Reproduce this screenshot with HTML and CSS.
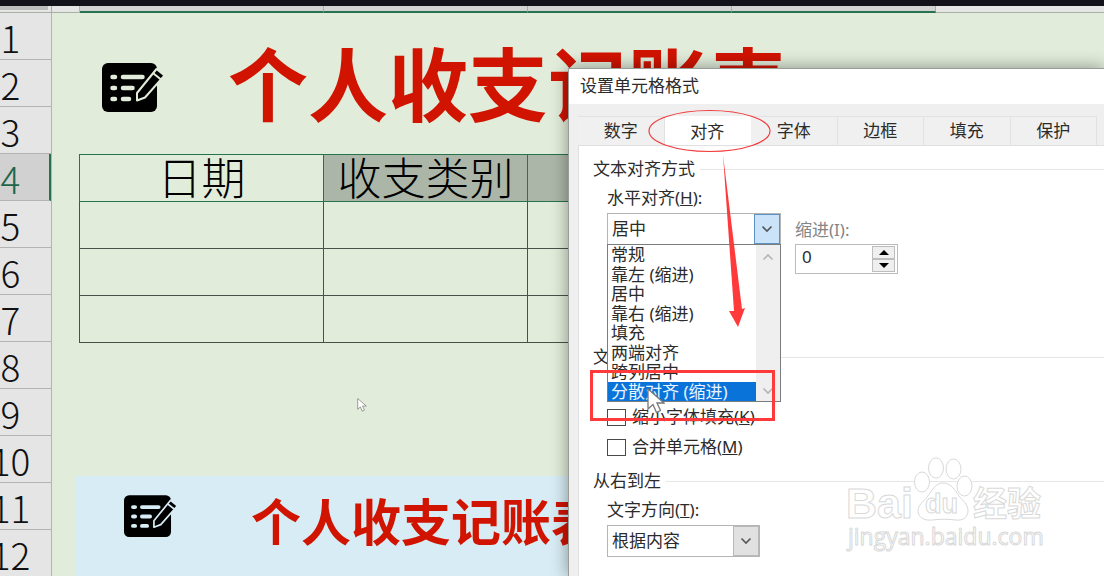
FILE: index.html
```html
<!DOCTYPE html>
<html lang="zh-CN">
<head>
<meta charset="utf-8">
<title>设置单元格格式</title>
<link rel="stylesheet" href="styles.css">
</head>
<body>
<svg width="0" height="0" class="defs" aria-hidden="true">
  <symbol id="note" viewBox="0 0 62 50">
    <rect x="0" y="0" width="55" height="49" rx="6" fill="#000"/>
    <path class="note-line" d="M10.500 14h2.500M21 14h19.500M10.500 25h2.500M21 25h9.500M10.500 36h2.500M21 36h6"/>
    <path d="M35 37.500V30L54.500 6l8 6.500-19.500 22z" fill="#000" class="note-edge"/>
    <path d="M51.500 10.500l7.500 6" class="note-edge"/>
  </symbol>
  <symbol id="chev" viewBox="0 0 12 8"><path d="M1.500 1.500L6 6l4.500-4.500" fill="none" stroke="currentColor" stroke-width="1.600"/></symbol>
  <symbol id="pointer" viewBox="0 0 18 26"><path d="M1 1v20l5-4.500 3.500 8 4-2-3.500-7.500h7z" fill="#fff" stroke="#777" stroke-width="1.300"/></symbol>
</svg>
<div class="app">
  <div class="topbar"></div>
  <div class="colheads"><i class="corner"></i><i class="gap"></i><i class="col"></i><i class="col"></i><i class="col"></i><i class="col"></i></div>
  <main class="sheet">
    <div class="rowheads">
      <span>1</span><span>2</span><span>3</span><span class="active">4</span><span>5</span><span>6</span><span>7</span><span>8</span><span>9</span><span>10</span><span>11</span><span>12</span>
    </div>
    <div class="cells">
      <header class="heading">
        <svg class="note-big"><use href="#note"/></svg>
        <h1>个人收支记账表</h1>
      </header>
      <table class="ledger">
        <colgroup><col class="c-date"><col class="c-std"><col class="c-std"><col class="c-std"></colgroup>
        <thead><tr><th>日期</th><th class="picked">收支类别</th><th class="picked"></th><th class="picked"></th></tr></thead>
        <tbody>
          <tr><td></td><td></td><td></td><td></td></tr>
          <tr><td></td><td></td><td></td><td></td></tr>
          <tr><td></td><td></td><td></td><td></td></tr>
        </tbody>
      </table>
      <section class="banner">
        <svg class="note-small"><use href="#note"/></svg>
        <h2>个人收支记账表</h2>
      </section>
    </div>
  </main>

  <section class="dialog" role="dialog" aria-labelledby="dlg-title">
    <h3 class="dialog-title" id="dlg-title">设置单元格格式</h3>
    <div class="dialog-body">
      <nav class="tabs" role="tablist">
        <button type="button" role="tab">数字</button>
        <button type="button" role="tab" class="on" aria-selected="true">对齐</button>
        <button type="button" role="tab">字体</button>
        <button type="button" role="tab">边框</button>
        <button type="button" role="tab">填充</button>
        <button type="button" role="tab">保护</button>
      </nav>
      <form class="panel">
        <h4 class="group">文本对齐方式</h4>
        <div class="align-row">
          <div class="field">
            <label for="horiz">水平对齐(<u>H</u>):</label>
            <div class="combo open">
              <select id="horiz"><option>居中</option></select>
              <span class="arrow"><svg><use href="#chev"/></svg></span>
              <div class="drop">
                <ul role="listbox" aria-label="水平对齐">
                  <li role="option">常规</li>
                  <li role="option">靠左 (缩进)</li>
                  <li role="option">居中</li>
                  <li role="option">靠右 (缩进)</li>
                  <li role="option">填充</li>
                  <li role="option">两端对齐</li>
                  <li role="option">跨列居中</li>
                  <li role="option" class="hot" aria-selected="true">分散对齐 (缩进)</li>
                </ul>
                <div class="scroll">
                  <svg class="up"><use href="#chev"/></svg>
                  <svg><use href="#chev"/></svg>
                </div>
              </div>
            </div>
          </div>
          <div class="field indent">
            <label for="indent">缩进(I):</label>
            <div class="spin">
              <input id="indent" type="text" value="0">
              <div class="steps">
                <button type="button" aria-label="增加"><svg viewBox="0 0 10 5"><path d="M0 5l5-5 5 5z"/></svg></button>
                <button type="button" aria-label="减少"><svg viewBox="0 0 10 5"><path d="M0 0l5 5 5-5z"/></svg></button>
              </div>
            </div>
          </div>
        </div>
        <h4 class="group control">文本控制</h4>
        <div class="checks">
          <label><input type="checkbox"><span>缩小字体填充(<u>K</u>)</span></label>
          <label><input type="checkbox"><span>合并单元格(<u>M</u>)</span></label>
        </div>
        <h4 class="group">从右到左</h4>
        <div class="field dir">
          <label for="dir">文字方向(<u>T</u>):</label>
          <div class="combo">
            <select id="dir"><option>根据内容</option></select>
            <span class="arrow"><svg><use href="#chev"/></svg></span>
          </div>
        </div>
      </form>
    </div>
  </section>

  <svg class="overlay" width="1104" height="576" viewBox="0 0 1104 576" aria-hidden="true">
    <g class="mark">
      <text x="846" y="518" class="m-bai">Bai</text>
      <ellipse cx="922" cy="482" rx="7.500" ry="10"/>
      <ellipse cx="936" cy="468" rx="7.500" ry="10"/>
      <ellipse cx="953.500" cy="469" rx="7.500" ry="10"/>
      <ellipse cx="964.500" cy="486" rx="7.500" ry="10"/>
      <path d="M943 483c8 0 12 7 16 13 4 5 9 8 9 15 0 6-5 10-12 9-8-1-16-1-24 0-8 1-14-3-14-9s5-9 9-14c5-6 8-14 16-14z"/>
      <text x="925" y="513" class="m-du">du</text>
      <text x="973" y="516" class="m-exp">经验</text>
      <text x="848" y="545" class="m-url">jingyan.baidu.com</text>
    </g>
    <use href="#pointer" x="357" y="398" width="10" height="14"/>
    <ellipse cx="709.500" cy="131" rx="60.500" ry="20.500" fill="none" stroke="#f33a3c" stroke-width="1.200"/>
    <path d="M723 155L742 309l3-1-7 19-9-16h5z" fill="#ff3a3a"/>
    <rect x="591.500" y="371.500" width="182" height="48" fill="none" stroke="#ff3a3a" stroke-width="3"/>
    <use href="#pointer" x="647" y="388" width="18" height="26"/>
  </svg>
</div>
</body>
</html>
```
FILE: styles.css
```css
* { box-sizing: border-box; }
body {
  margin: 0;
  font: 17px/20px "Noto Sans", "Noto Sans CJK SC", sans-serif;
  color: #2b2b2b;
}
h1, h2, h3, h4, ul { margin: 0; padding: 0; font-weight: 400; }
button, input, select { font: inherit; color: inherit; }
.defs { position: absolute; }
.app {
  position: relative;
  display: flex;
  flex-direction: column;
  height: 100vh;
  overflow: hidden;
  background: #e1ecda;
}
.topbar { flex: none; height: 6px; background: #12131a; }
.colheads {
  flex: none;
  display: flex;
  height: 7px;
  background: #e5e5e5;
  border-bottom: 1px solid #a8b0a4;
}
.colheads i { flex: none; }
.corner { width: 52px; border-right: 1px solid #aaa; background: linear-gradient(#bdbdbd, #bdbdbd) 0 0 / 48px 4px no-repeat; }
.gap { width: 28px; border-right: 1px solid #b5b5b5; }
.col { width: 204px; height: 7px; background: #d3d3d3; border-right: 1px solid #aaa; border-bottom: 2px solid #27724f; }
.gap + .col { width: 244px; }

.sheet { flex: 1; display: flex; min-height: 0; }
.rowheads {
  flex: none;
  width: 52px;
  overflow: hidden;
  background: #e5e5e5;
  border-right: 1px solid #b0b5ad;
}
.rowheads span {
  display: flex;
  justify-content: center;
  height: 47px;
  padding-right: 30px;
  border-bottom: 1px solid #b3b3b3;
  font: 300 37px/48px "Noto Sans CJK SC", sans-serif;
  color: #111;
}
.rowheads .active { background: #d1d1d1; color: #21664a; border-right: 2px solid #27724f; padding-right: 28px; }

.cells { flex: 1; display: flex; flex-direction: column; min-width: 0; }
.heading { flex: none; display: flex; align-items: center; gap: 64px; height: 141px; padding: 0 0 8px 50px; }
.heading h1, .banner h2 {
  font-family: "Noto Sans CJK SC", sans-serif;
  font-weight: 700;
  color: #d01400;
  white-space: nowrap;
}
.heading h1 { font-size: 80px; line-height: 100px; }
.note-big { flex: none; width: 62px; height: 50px; margin-top: 16px; color: #e1ecda; }
.note-small { flex: none; width: 53px; height: 43px; color: #d7ecf4; }
.note-line { stroke: currentColor; stroke-width: 4.5; stroke-linecap: round; }
.note-edge { stroke: currentColor; stroke-width: 2; stroke-linejoin: round; }

.ledger {
  flex: none;
  align-self: flex-start;
  margin-left: 27px;
  table-layout: fixed;
  width: 857px;
  border-collapse: collapse;
}
.c-date { width: 244px; }
.c-std { width: 204px; }
.ledger tr { height: 47px; }
.ledger td { padding: 0; border: 1px solid #4a504a; }
.ledger th {
  padding: 0 0 4px;
  border: 1px solid #555c55;
  border-top-color: #27724f;
  border-bottom-color: #27724f;
  font: 300 44px/42px "Noto Sans CJK SC", sans-serif;
  color: #000;
}
.ledger .picked { background: #acb6a8; }
.banner {
  flex: 1;
  display: flex;
  align-items: flex-start;
  gap: 74px;
  margin: 133px 0 0 24px;
  padding: 19px 0 0 48px;
  background: #d7ecf4;
}
.banner h2 { font-size: 50px; line-height: 48px; }

.dialog {
  position: absolute;
  top: 68px;
  left: 568px;
  right: 0;
  bottom: 0;
  display: flex;
  flex-direction: column;
  border: solid #9a9e98;
  border-width: 1px 0 0 1px;
  background: #efefef;
  box-shadow: 0 0 16px rgba(0, 0, 0, .4);
}
.dialog-title { flex: none; padding: 7px 11px 8px; font-size: 17px; line-height: 20px; background: #fff; }
.dialog-body { flex: 1; display: flex; flex-direction: column; padding: 12px 0 0 9px; }
.tabs { display: grid; grid-template-columns: repeat(6, 1fr); padding-right: 7px; }
.tabs button {
  height: 29px;
  padding: 0;
  border: 1px solid #e2e2e2;
  border-width: 1px 1px 0 0;
  background: #f0f0f0;
}
.panel {
  flex: 1;
  padding: 13px 0 0 14px;
  border: solid #e0e0e0;
  border-width: 1px 0 0 1px;
  background: #fff;
}
.tabs .on { height: 30px; margin-bottom: -1px; background: #fff; border-color: #fff; }
.group { display: flex; align-items: center; gap: 5px; font-size: 17px; line-height: 20px; }
.group::after { content: ""; flex: 1; height: 1px; background: #e6e6e6; }
.align-row { display: flex; gap: 14px; padding: 9px 0 0 14px; }
.field label { display: block; line-height: 20px; }
.combo { position: relative; width: 174px; height: 32px; margin-top: 5px; }
.combo select {
  width: 100%;
  height: 100%;
  padding: 0 4px;
  border: 1px solid #b5b5b5;
  border-radius: 0;
  background: #fff;
  appearance: none;
}
.arrow {
  position: absolute;
  top: 1px;
  right: 1px;
  bottom: 1px;
  width: 26px;
  display: flex;
  align-items: center;
  justify-content: center;
  border: 1px solid #b9b9b9;
  background: #e1e1e1;
  color: #555;
  pointer-events: none;
}
.combo svg { width: 12px; height: 8px; }
.open .arrow { border-color: #5c93c4; background: #cae3f9; }
.drop {
  position: absolute;
  top: 31px;
  left: 0;
  right: 0;
  z-index: 2;
  display: flex;
  height: 158px;
  border: 1px solid #7c7c7c;
  background: #fff;
}
.drop ul { flex: 1; display: grid; grid-template-rows: repeat(8, minmax(0, 1fr)); list-style: none; }
.drop li { padding-left: 3px; line-height: 20px; white-space: nowrap; }
.drop .hot { background: #0a73da; color: #e8f3ff; }
.scroll {
  display: flex;
  flex-direction: column;
  align-items: center;
  justify-content: space-between;
  width: 24px;
  padding: 8px 0 6px;
  background: #efefef;
  color: #b5b5b5;
}
.scroll .up { transform: rotate(180deg); }
.indent { padding-top: 32px; }
.indent label { color: #858585; }
.spin {
  display: flex;
  width: 103px;
  height: 30px;
  margin-top: 4px;
  padding: 1px 2px;
  border: 1px solid #bcbcbc;
}
.spin input { flex: 1; min-width: 0; padding: 0 4px 4px; border: 0; background: transparent; }
.steps { display: flex; flex-direction: column; width: 23px; }
.steps button {
  flex: 1;
  display: flex;
  align-items: center;
  justify-content: center;
  padding: 0;
  border: 1px solid #bdbdbd;
  background: #efefef;
}
.steps svg { width: 10px; height: 5px; }
.control { margin-top: 73px; }
.checks { display: flex; flex-direction: column; gap: 10px; padding: 40px 0 14px 14px; }
.checks label { display: flex; align-items: center; gap: 6px; line-height: 20px; }
.checks input {
  width: 19px;
  height: 17px;
  margin: 0;
  border: 1px solid #4a4a4a;
  background: #fff;
  appearance: none;
}
.dir { padding: 9px 0 0 14px; }
.dir .combo { width: 153px; }

.overlay { position: absolute; top: 0; left: 0; z-index: 5; pointer-events: none; }
.mark { fill: #fff; stroke: #d9d9d9; stroke-width: 1; font-family: "Noto Sans CJK SC", sans-serif; }
.m-bai { font: 700 43px "Liberation Sans", sans-serif; }
.m-du { font: 700 27px "Liberation Sans", sans-serif; }
.m-exp { font-size: 34px; font-weight: 700; }
.m-url { font: 23px "Open Sans", sans-serif; }
```
